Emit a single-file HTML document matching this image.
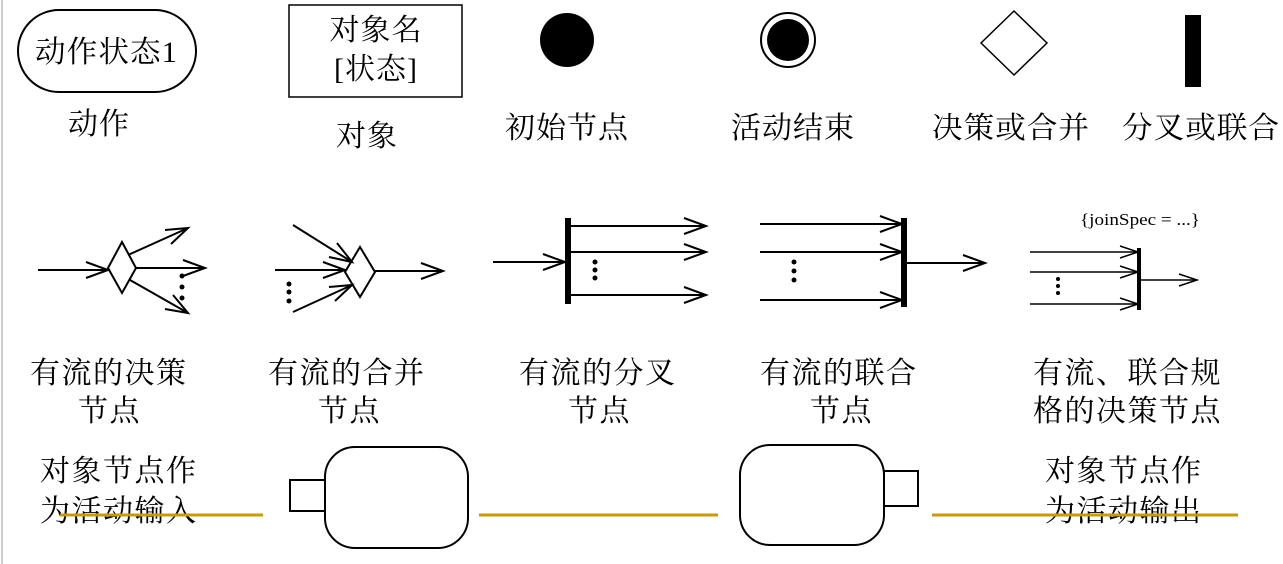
<!DOCTYPE html>
<html><head><meta charset="utf-8"><style>
body{margin:0;background:#fff;width:1283px;height:564px;overflow:hidden}
svg{display:block}
text{font-family:"Liberation Serif","Noto Serif CJK SC",serif;fill:#000}
</style></head><body>
<svg width="1283" height="564" viewBox="0 0 1283 564">
<line x1="2" y1="0" x2="2" y2="564" stroke="#ccc" stroke-width="2"/>
<g fill="none" stroke="#000" stroke-width="2">
<rect x="18" y="10" width="178" height="82" rx="41"/>
<rect x="289" y="5" width="173" height="92" stroke-width="1.5"/>
<circle cx="788" cy="40" r="27"/>
<polygon points="1014,11 1047,43 1014,75 981,43" stroke-width="1.5"/>
</g>
<circle cx="567" cy="40" r="27" fill="#000"/>
<circle cx="788" cy="40" r="21" fill="#000"/>
<rect x="1185" y="15" width="16" height="72" fill="#000"/>
<g font-size="30" letter-spacing="1">
<text x="35" y="62" textLength="143" lengthAdjust="spacingAndGlyphs">动作状态1</text>
<text x="376" y="40" text-anchor="middle">对象名</text>
<text x="376" y="79" text-anchor="middle">[状态]</text>
<text x="68" y="134">动作</text>
<text x="336" y="146">对象</text>
<text x="505" y="138">初始节点</text>
<text x="731" y="138">活动结束</text>
<text x="932" y="138" textLength="158" lengthAdjust="spacingAndGlyphs">决策或合并</text>
<text x="1122" y="138" textLength="158" lengthAdjust="spacingAndGlyphs">分叉或联合</text>
</g>
<g fill="none" stroke="#000" stroke-width="2">
<line x1="38" y1="270" x2="108" y2="270"/><polyline points="86,262 108,270 86,278"/>
<polygon points="122,242 136,268 122,293 108,268"/>
<line x1="128" y1="255" x2="188" y2="228"/><polyline points="171,244 188,228 165,230"/>
<line x1="136" y1="268" x2="205" y2="268"/><polyline points="183,260 205,268 183,276"/>
<line x1="130" y1="280" x2="188" y2="313"/><polyline points="165,309 188,313 173,295"/>
<line x1="293" y1="225" x2="352" y2="262"/><polyline points="329,257 352,262 337,243"/>
<line x1="275" y1="270" x2="345" y2="270"/><polyline points="323,262 345,270 323,278"/>
<line x1="293" y1="312" x2="352" y2="285"/><polyline points="335,301 352,285 329,287"/>
<polygon points="360,247 375,272 360,297 345,272"/>
<line x1="375" y1="271" x2="443" y2="271"/><polyline points="421,263 443,271 421,279"/>
<line x1="493" y1="262" x2="565" y2="262"/><polyline points="543,254 565,262 543,270"/>
<line x1="571" y1="226" x2="706" y2="226"/><polyline points="684,218 706,226 684,234"/>
<line x1="571" y1="252" x2="706" y2="252"/><polyline points="684,244 706,252 684,260"/>
<line x1="571" y1="295" x2="706" y2="295"/><polyline points="684,287 706,295 684,303"/>
<line x1="760" y1="224" x2="902" y2="224"/><polyline points="880,216 902,224 880,232"/>
<line x1="760" y1="252" x2="902" y2="252"/><polyline points="880,244 902,252 880,260"/>
<line x1="760" y1="300" x2="902" y2="300"/><polyline points="880,292 902,300 880,308"/>
<line x1="906" y1="263" x2="985" y2="263"/><polyline points="963,255 985,263 963,271"/>
<g stroke-width="1.5">
<line x1="1030" y1="252" x2="1138" y2="252"/><polyline points="1120,246 1138,252 1120,258"/>
<line x1="1030" y1="272" x2="1138" y2="272"/><polyline points="1120,266 1138,272 1120,278"/>
<line x1="1030" y1="304" x2="1138" y2="304"/><polyline points="1120,298 1138,304 1120,310"/>
<line x1="1141" y1="280" x2="1197" y2="280"/><polyline points="1179,274 1197,280 1179,286"/>
</g>
</g>
<rect x="565" y="218" width="6" height="86" fill="#000"/>
<rect x="901" y="218" width="6" height="89" fill="#000"/>
<rect x="1137" y="248" width="4" height="62" fill="#000"/>
<g fill="#000">
<circle cx="182" cy="276" r="2.5"/><circle cx="182" cy="287" r="2.5"/><circle cx="182" cy="298" r="2.5"/>
<circle cx="289" cy="284" r="2.5"/><circle cx="289" cy="292" r="2.5"/><circle cx="289" cy="301" r="2.5"/>
<circle cx="595" cy="262" r="2.5"/><circle cx="595" cy="270" r="2.5"/><circle cx="595" cy="278" r="2.5"/>
<circle cx="794" cy="262" r="2.5"/><circle cx="794" cy="271" r="2.5"/><circle cx="794" cy="280" r="2.5"/>
<circle cx="1058" cy="279" r="2"/><circle cx="1058" cy="286" r="2"/><circle cx="1058" cy="293" r="2"/>
</g>
<text x="1080" y="225" font-size="17" textLength="120" lengthAdjust="spacingAndGlyphs">{joinSpec = ...}</text>
<g font-size="30" letter-spacing="1.5">
<text x="30" y="383">有流的决策</text><text x="78" y="421">节点</text>
<text x="268" y="383">有流的合并</text><text x="318" y="421">节点</text>
<text x="519" y="383">有流的分叉</text><text x="568" y="421">节点</text>
<text x="760" y="383">有流的联合</text><text x="810" y="421">节点</text>
<text x="1033" y="383">有流、联合规</text><text x="1033" y="421">格的决策节点</text>
<text x="40" y="481">对象节点作</text><text x="40" y="521">为活动输入</text>
<text x="1045" y="481">对象节点作</text><text x="1045" y="521">为活动输出</text>
</g>
<g stroke="#CC9900" stroke-width="3">
<line x1="60" y1="515" x2="263" y2="515"/>
<line x1="479" y1="515" x2="718" y2="515"/>
<line x1="932" y1="515" x2="1238" y2="515"/>
</g>
<g fill="#fff" stroke="#000" stroke-width="2">
<rect x="290" y="480" width="35" height="31"/>
<rect x="325" y="447" width="143" height="101" rx="30"/>
<rect x="884" y="471" width="34" height="35"/>
<rect x="740" y="445" width="144" height="100" rx="30"/>
</g>
</svg>
</body></html>
